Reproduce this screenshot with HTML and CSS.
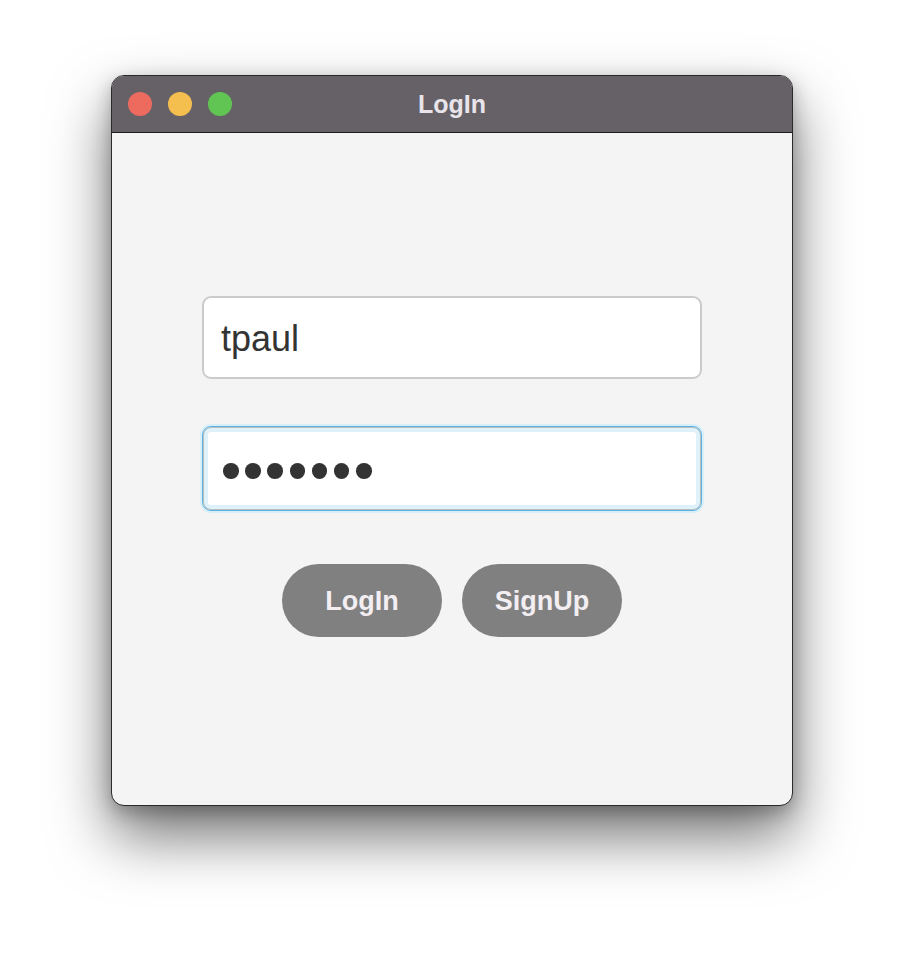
FILE: index.html
```html
<!DOCTYPE html>
<html>
<head>
<meta charset="utf-8">
<link rel="stylesheet" href="styles.css">
</head>
<body>
<div class="window">
  <div class="titlebar">
    <div class="lights">
      <span class="light red"></span>
      <span class="light yellow"></span>
      <span class="light green"></span>
    </div>
    <div class="title">LogIn</div>
  </div>
  <div class="content">
    <div class="field">tpaul</div>
    <div class="field focused">
      <span class="dot"></span><span class="dot"></span><span class="dot"></span><span class="dot"></span><span class="dot"></span><span class="dot"></span><span class="dot"></span>
    </div>
    <div class="buttons">
      <div class="btn">LogIn</div>
      <div class="btn">SignUp</div>
    </div>
  </div>
</div>
</body>
</html>
```
FILE: styles.css
```css
html, body {
  margin: 0;
  padding: 0;
  background: #ffffff;
  font-family: "Liberation Sans", Arial, sans-serif;
}
body {
  box-sizing: border-box;
  min-height: 954px;
  padding: 75px 0 0 111px;
  overflow: hidden;
}
.window {
  width: 680px;
  height: 729px;
  border: 1px solid #2a2a2a;
  border-radius: 13px;
  background: #f4f4f4;
  overflow: hidden;
  box-shadow: 0 30px 60px rgba(0, 0, 0, 0.55), 0 6px 18px rgba(0, 0, 0, 0.25);
}
.titlebar {
  position: relative;
  height: 56px;
  background: #656167;
  border-bottom: 1px solid #1e1e1e;
  display: flex;
  align-items: center;
  justify-content: center;
}
.lights {
  position: absolute;
  left: 16px;
  top: 16px;
  display: flex;
  gap: 16px;
}
.light {
  width: 24px;
  height: 24px;
  border-radius: 50%;
  display: block;
}
.red { background: #ed6a5e; }
.yellow { background: #f5bf4f; }
.green { background: #61c554; }
.title {
  color: #e8e4ea;
  font-weight: bold;
  font-size: 25px;
}
.content {
  display: flex;
  flex-direction: column;
  align-items: center;
  padding-top: 163px;
}
.field {
  box-sizing: border-box;
  width: 500px;
  height: 83px;
  background: #fff;
  border: 2px solid #cbcbcb;
  border-radius: 9px;
  display: flex;
  align-items: center;
  padding-left: 17px;
  padding-top: 3px;
  font-size: 36px;
  color: #333;
}
.field.focused {
  margin-top: 47px;
  height: 85px;
  padding-top: 5px;
  border: 1px solid #5ab4df;
  box-shadow: 0 0 0 2px #d8eef8, inset 0 0 0 1px #bdbdbd, inset 0 0 0 5px #dff1fa;
  padding-left: 20px;
  gap: 6.7px;
}
.dot {
  width: 15.5px;
  height: 15.5px;
  border-radius: 50%;
  background: #333;
  display: block;
}
.buttons {
  margin-top: 53px;
  display: flex;
  gap: 20px;
}
.btn {
  width: 160px;
  height: 73px;
  border-radius: 37px;
  background: #808080;
  color: #f2eef2;
  font-weight: bold;
  font-size: 27px;
  display: flex;
  align-items: center;
  justify-content: center;
  padding-top: 2px;
  box-sizing: border-box;
}
```
